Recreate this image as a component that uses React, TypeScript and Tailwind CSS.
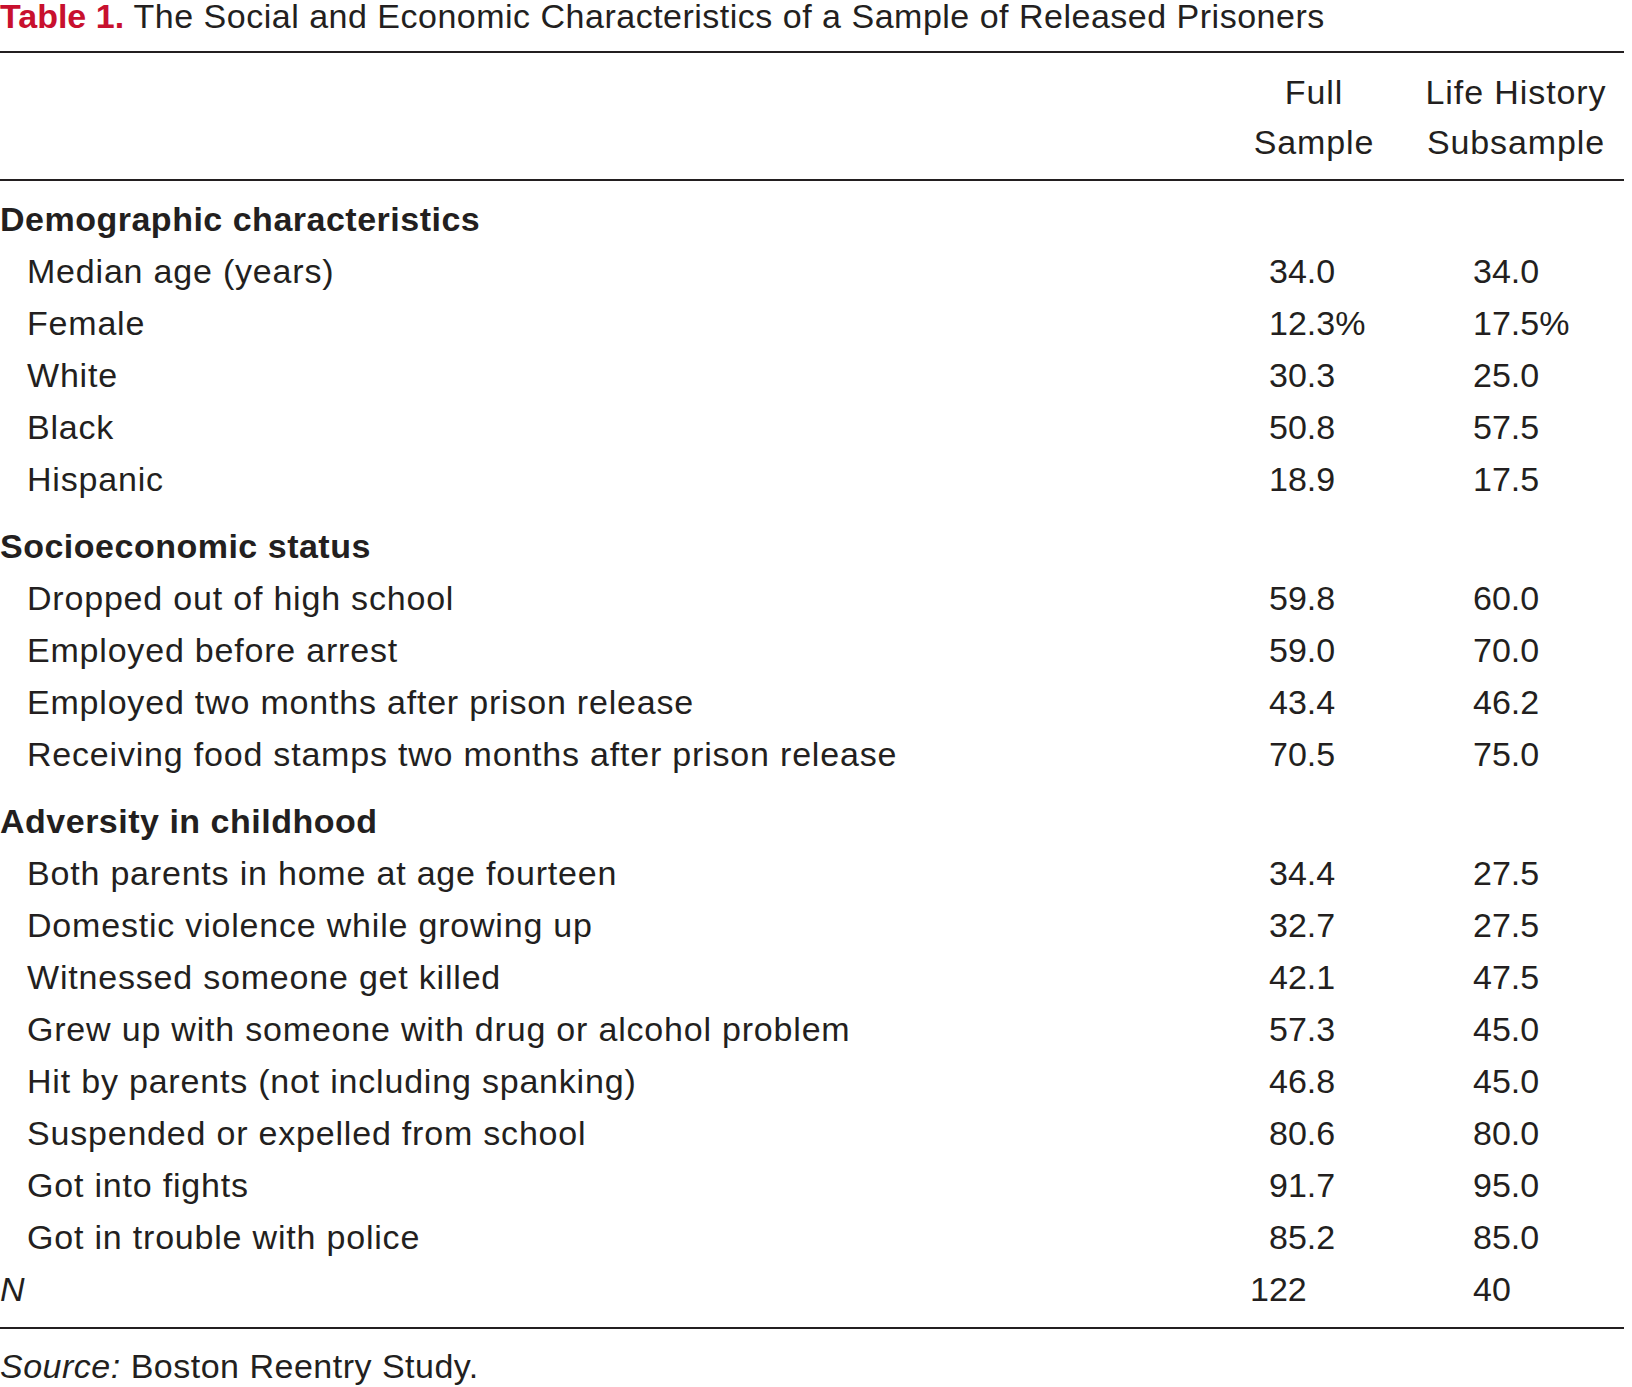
import React from "react";

type Row = { label: string; full: string; life: string };
type Section = { title: string; rows: Row[] };

const sections: Section[] = [
  {
    title: "Demographic characteristics",
    rows: [
      { label: "Median age (years)", full: "34.0", life: "34.0" },
      { label: "Female", full: "12.3%", life: "17.5%" },
      { label: "White", full: "30.3", life: "25.0" },
      { label: "Black", full: "50.8", life: "57.5" },
      { label: "Hispanic", full: "18.9", life: "17.5" },
    ],
  },
  {
    title: "Socioeconomic status",
    rows: [
      { label: "Dropped out of high school", full: "59.8", life: "60.0" },
      { label: "Employed before arrest", full: "59.0", life: "70.0" },
      { label: "Employed two months after prison release", full: "43.4", life: "46.2" },
      { label: "Receiving food stamps two months after prison release", full: "70.5", life: "75.0" },
    ],
  },
  {
    title: "Adversity in childhood",
    rows: [
      { label: "Both parents in home at age fourteen", full: "34.4", life: "27.5" },
      { label: "Domestic violence while growing up", full: "32.7", life: "27.5" },
      { label: "Witnessed someone get killed", full: "42.1", life: "47.5" },
      { label: "Grew up with someone with drug or alcohol problem", full: "57.3", life: "45.0" },
      { label: "Hit by parents (not including spanking)", full: "46.8", life: "45.0" },
      { label: "Suspended or expelled from school", full: "80.6", life: "80.0" },
      { label: "Got into fights", full: "91.7", life: "95.0" },
      { label: "Got in trouble with police", full: "85.2", life: "85.0" },
    ],
  },
];

const font = { fontFamily: '"Liberation Sans", Arial, sans-serif' };

export default function App() {
  return (
    <div className="w-[1624px] bg-white text-[#231f20] text-[34px]" style={font}>
      <div className="h-[51px] leading-[32px] whitespace-nowrap">
        <span className="font-bold text-[#c8102e]">Table 1.</span>{" "}
        <span className="tracking-[0.5px]">The Social and Economic Characteristics of a Sample of Released Prisoners</span>
      </div>

      <div className="border-t-2 border-b-2 border-[#231f20] grid grid-cols-[1fr_188px_216px] pt-[14px] pb-[12px] leading-[50px] tracking-[0.9px]">
        <div />
        <div className="text-center">
          <div>Full</div>
          <div>Sample</div>
        </div>
        <div className="text-center">
          <div>Life History</div>
          <div>Subsample</div>
        </div>
      </div>

      <div className="pt-[12px] pb-[12px] leading-[52px]">
        {sections.map((s, i) => (
          <div key={s.title} className={i === 0 ? "" : "pt-[15px]"}>
            <div className="font-bold tracking-[0.5px]">{s.title}</div>
            {s.rows.map((r) => (
              <div key={r.label} className="grid grid-cols-[1fr_188px_216px]">
                <div className="pl-[27px] whitespace-nowrap tracking-[0.8px]">{r.label}</div>
                <div className="pl-[49px]">{r.full}</div>
                <div className="pl-[65px]">{r.life}</div>
              </div>
            ))}
          </div>
        ))}
        <div className="grid grid-cols-[1fr_188px_216px]">
          <div className="italic">N</div>
          <div className="pl-[30px]">122</div>
          <div className="pl-[65px]">40</div>
        </div>
      </div>

      <div className="border-t-2 border-[#231f20] pt-[17px] leading-[40px] tracking-[0.5px]">
        <span className="italic">Source:</span> Boston Reentry Study.
      </div>
    </div>
  );
}
